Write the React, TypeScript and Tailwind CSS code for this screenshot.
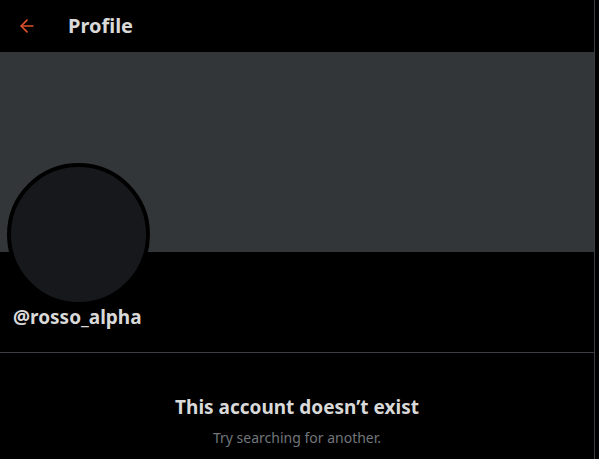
import { ArrowLeft } from "lucide-react";

export default function App() {
  return (
    <div
      className="w-[599px] h-[459px] bg-black overflow-hidden text-[#d9d9d9]"
      style={{ fontFamily: '"Noto Sans", "Open Sans", sans-serif' }}
    >
      <div className="w-[595px] h-full border-r border-[#3b3f43]">
        {/* header */}
        <div className="h-[52px] flex items-center">
          <div className="w-[68px] pl-[17px]">
            <ArrowLeft size={20} strokeWidth={2} color="#e0522a" />
          </div>
          <h1 className="text-[20px] font-bold leading-none">Profile</h1>
        </div>

        {/* banner */}
        <div className="h-[200px] bg-[#333639]" />

        {/* avatar + handle */}
        <div className="relative h-[100px] px-[13px]">
          <div className="absolute left-[7px] -top-[89px] w-[143px] h-[143px] rounded-full bg-[#16181c] border-4 border-black" />
          <div className="pt-[56px] text-[19px] font-bold leading-none">
            @rosso_alpha
          </div>
        </div>

        {/* empty state */}
        <div className="border-t border-[#3b3f43] pt-[41px] flex flex-col items-center">
          <h2 className="text-[19px] font-bold leading-[26px]">
            This account doesn’t exist
          </h2>
          <p className="mt-[7px] text-[14px] text-[#71767b]">
            Try searching for another.
          </p>
        </div>
      </div>
    </div>
  );
}
